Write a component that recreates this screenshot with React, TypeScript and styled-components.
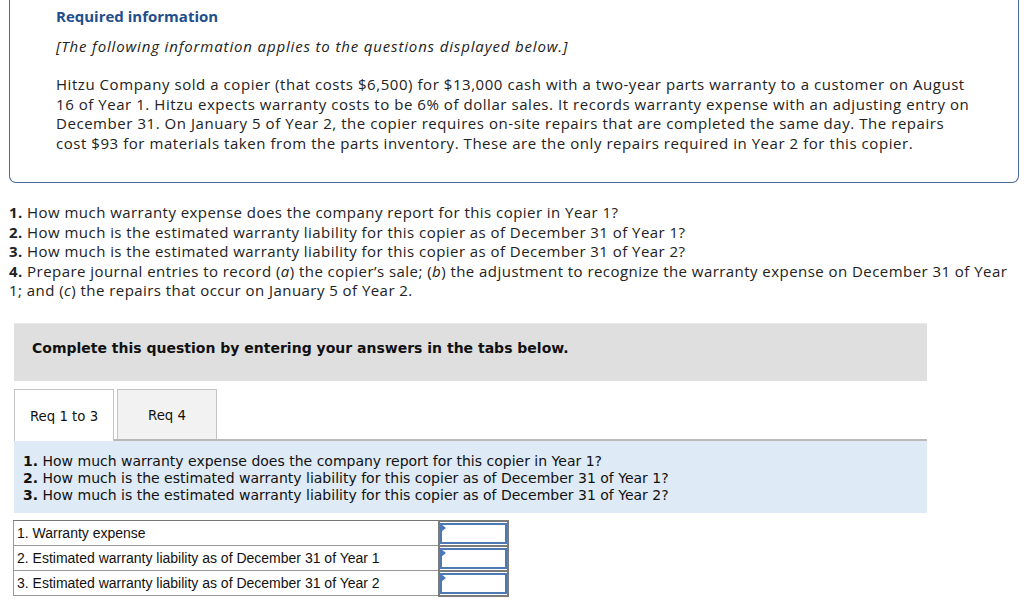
import React from "react";
import styled, { createGlobalStyle } from "styled-components";

const GlobalStyle = createGlobalStyle`
  html, body {
    margin: 0;
    padding: 0;
    background: #ffffff;
  }
  body {
    font-family: "Open Sans", "Lato", sans-serif;
    color: #222;
  }
`;

const Page = styled.div`
  width: 1024px;
  height: 605px;
  overflow: hidden;
`;

const InfoBox = styled.section`
  margin: 0 5px 0 9px;
  border: 1px solid #4a6a97;
  border-top: none;
  border-radius: 0 0 7px 7px;
  padding: 6px 20px 29px 46px;
`;

const InfoTitle = styled.h2`
  margin: 0;
  font-size: 15px;
  line-height: 20px;
  font-weight: 700;
  color: #1f4e8c;
`;

const InfoNote = styled.p`
  margin: 10px 0 0;
  font-size: 15px;
  line-height: 20px;
  font-style: italic;
  letter-spacing: 0.85px;
  color: #222;
`;

const InfoText = styled.p`
  margin: 19px 0 0;
  font-size: 15px;
  line-height: 19.5px;
  letter-spacing: 0.55px;
  white-space: nowrap;
  color: #222;
`;

const Questions = styled.ol`
  list-style: none;
  margin: 20px 0 0;
  padding: 0 4px 0 9px;
  font-size: 15px;
  line-height: 19.5px;
  letter-spacing: 0.45px;
  white-space: nowrap;
  color: #222;

  b {
    font-weight: 700;
  }
`;

const Instruction = styled.div`
  margin: 22px 0 0 14px;
  width: 913px;
  height: 58px;
  box-sizing: border-box;
  background: #dfdfdf;
  border-top: 1px solid #e9e9e9;
  display: flex;
  align-items: center;
  padding: 0 0 9px 18px;
  font-family: "DejaVu Sans", Verdana, sans-serif;
  font-weight: 700;
  font-size: 14px;
  color: #111;
`;

const TabRow = styled.div`
  margin: 8px 0 0 14px;
  width: 913px;
  display: flex;
  align-items: flex-end;
  gap: 3px;
  border-bottom: 2px solid #b9b9b9;
`;

const Tab = styled.div<{ $active?: boolean }>`
  width: 100px;
  box-sizing: border-box;
  border: 1px solid #c4c4c4;
  border-bottom: none;
  background: ${(p) => (p.$active ? "#ffffff" : "#f2f2f2")};
  display: flex;
  align-items: center;
  justify-content: center;
  font-family: "DejaVu Sans", Verdana, sans-serif;
  font-size: 13.3px;
  color: #111;
  margin-bottom: ${(p) => (p.$active ? "-2px" : "0")};
  height: ${(p) => (p.$active ? "52px" : "50px")};
  padding: ${(p) => (p.$active ? "2px 0 0" : "2px 0 0")};
`;

const QuestionPanel = styled.div`
  margin-left: 14px;
  width: 913px;
  box-sizing: border-box;
  background: #deeaf6;
  padding: 12px 9px 9px 9px;
  font-family: "DejaVu Sans", Verdana, sans-serif;
  font-size: 14px;
  line-height: 17px;
  color: #111;

  b {
    font-weight: 700;
  }
`;

const AnswerTable = styled.table`
  margin: 7px 0 0 13px;
  border-collapse: collapse;
  font-family: "Liberation Sans", Arial, sans-serif;
  font-size: 14px;
  color: #111;
`;

const LabelCell = styled.td`
  width: 421px;
  height: 23px;
  border: 1px solid #777;
  border-left-color: #999;
  border-bottom-color: #999;
  padding: 0 0 0 3px;
`;

const InputCell = styled.td`
  width: 67px;
  height: 23px;
  padding: 0;
  border: 2px solid #7a7a7a;
`;

const InputBox = styled.div`
  height: 21px;
  box-sizing: border-box;
  border: 2px solid #4d79b5;
  background: #fff;
  position: relative;
`;

const Marker = styled.span`
  position: absolute;
  top: -1px;
  left: -1px;
  width: 0;
  height: 0;
  border-top: 4px solid transparent;
  border-bottom: 4px solid transparent;
  border-left: 5px solid #4a78c0;
`;

const rows = [
  "1. Warranty expense",
  "2. Estimated warranty liability as of December 31 of Year 1",
  "3. Estimated warranty liability as of December 31 of Year 2",
];

export default function App() {
  return (
    <Page>
      <GlobalStyle />
      <InfoBox>
        <InfoTitle>Required information</InfoTitle>
        <InfoNote>[The following information applies to the questions displayed below.]</InfoNote>
        <InfoText>
          Hitzu Company sold a copier (that costs $6,500) for $13,000 cash with a two-year parts warranty to a customer on August
          <br />
          16 of Year 1. Hitzu expects warranty costs to be 6% of dollar sales. It records warranty expense with an adjusting entry on
          <br />
          December 31. On January 5 of Year 2, the copier requires on-site repairs that are completed the same day. The repairs
          <br />
          cost $93 for materials taken from the parts inventory. These are the only repairs required in Year 2 for this copier.
        </InfoText>
      </InfoBox>

      <Questions>
        <li>
          <b>1.</b> How much warranty expense does the company report for this copier in Year 1?
        </li>
        <li>
          <b>2.</b> How much is the estimated warranty liability for this copier as of December 31 of Year 1?
        </li>
        <li>
          <b>3.</b> How much is the estimated warranty liability for this copier as of December 31 of Year 2?
        </li>
        <li>
          <b>4.</b> Prepare journal entries to record (<i>a</i>) the copier’s sale; (<i>b</i>) the adjustment to recognize the
          warranty expense on December 31 of Year
          <br />
          1; and (<i>c</i>) the repairs that occur on January 5 of Year 2.
        </li>
      </Questions>

      <Instruction>Complete this question by entering your answers in the tabs below.</Instruction>

      <TabRow>
        <Tab $active>Req 1 to 3</Tab>
        <Tab>Req 4</Tab>
      </TabRow>

      <QuestionPanel>
        <div>
          <b>1.</b> How much warranty expense does the company report for this copier in Year 1?
        </div>
        <div>
          <b>2.</b> How much is the estimated warranty liability for this copier as of December 31 of Year 1?
        </div>
        <div>
          <b>3.</b> How much is the estimated warranty liability for this copier as of December 31 of Year 2?
        </div>
      </QuestionPanel>

      <AnswerTable>
        <tbody>
          {rows.map((r) => (
            <tr key={r}>
              <LabelCell>{r}</LabelCell>
              <InputCell>
                <InputBox>
                  <Marker />
                </InputBox>
              </InputCell>
            </tr>
          ))}
        </tbody>
      </AnswerTable>
    </Page>
  );
}
